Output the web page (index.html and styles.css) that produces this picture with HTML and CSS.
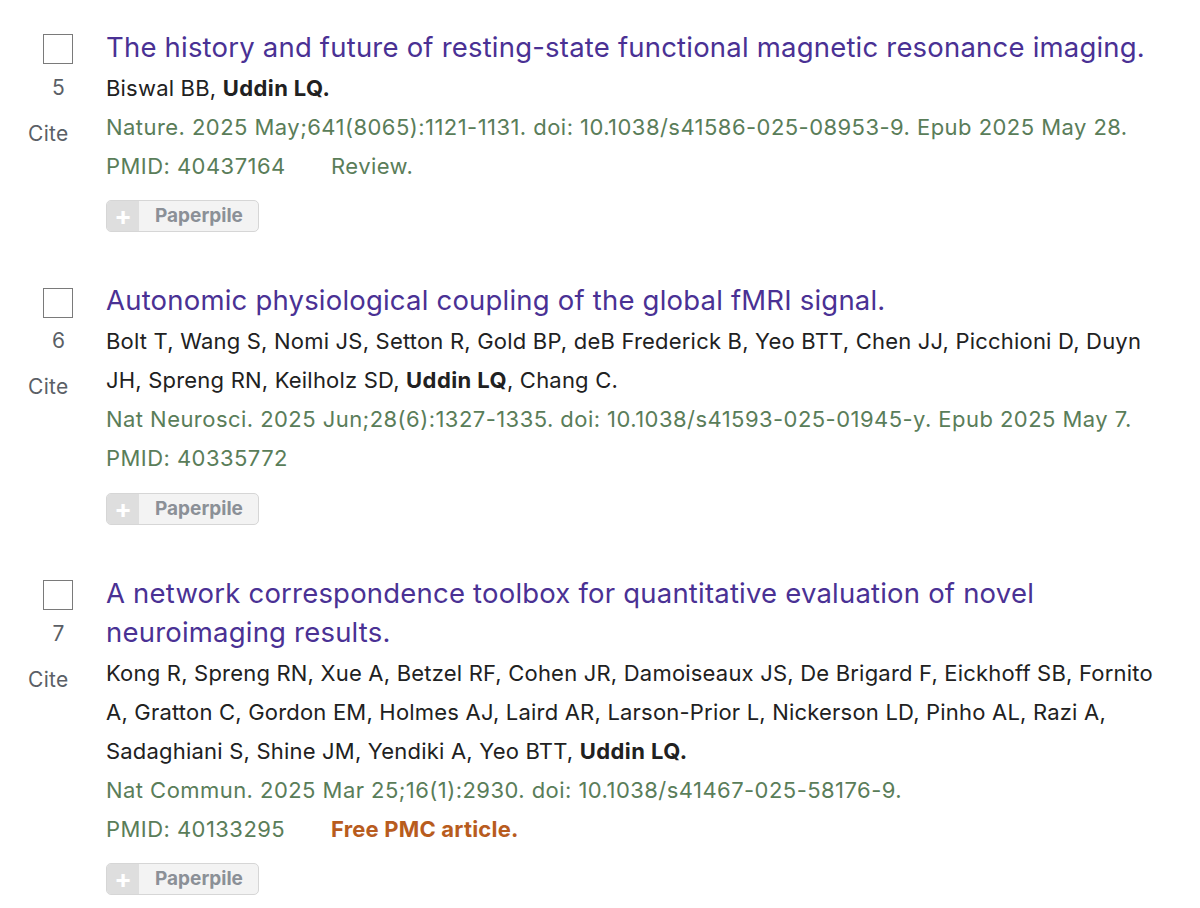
FILE: index.html
```html
<!DOCTYPE html>
<html lang="en">
<head>
<meta charset="utf-8">
<title>Publications</title>
<link rel="stylesheet" href="styles.css">
</head>
<body>
<div class="list">
  <article class="item">
    <div class="side">
      <span class="check"></span>
      <span class="num">5</span>
      <span class="cite">Cite</span>
    </div>
    <div class="main">
      <a class="title" href="#">The history and future of resting-state functional magnetic resonance imaging.</a>
      <div class="authors">Biswal BB, <b>Uddin LQ.</b></div>
      <div class="journal">Nature. 2025 May;641(8065):1121-1131. doi: 10.1038/s41586-025-08953-9. Epub 2025 May 28.</div>
      <div class="journal"><span class="pmid">PMID: 40437164</span><span class="extra">Review.</span></div>
      <div class="pp"><span class="pp-plus">+</span><span class="pp-label">Paperpile</span></div>
    </div>
  </article>
  <article class="item">
    <div class="side">
      <span class="check"></span>
      <span class="num">6</span>
      <span class="cite">Cite</span>
    </div>
    <div class="main">
      <a class="title" href="#">Autonomic physiological coupling of the global fMRI signal.</a>
      <div class="authors">Bolt T, Wang S, Nomi JS, Setton R, Gold BP, deB Frederick B, Yeo BTT, Chen JJ, Picchioni D, Duyn JH, Spreng RN, Keilholz SD, <b>Uddin LQ</b>, Chang C.</div>
      <div class="journal">Nat Neurosci. 2025 Jun;28(6):1327-1335. doi: 10.1038/s41593-025-01945-y. Epub 2025 May 7.</div>
      <div class="journal"><span class="pmid">PMID: 40335772</span></div>
      <div class="pp"><span class="pp-plus">+</span><span class="pp-label">Paperpile</span></div>
    </div>
  </article>
  <article class="item">
    <div class="side">
      <span class="check"></span>
      <span class="num">7</span>
      <span class="cite">Cite</span>
    </div>
    <div class="main">
      <a class="title" href="#">A network correspondence toolbox for quantitative evaluation of novel neuroimaging results.</a>
      <div class="authors">Kong R, Spreng RN, Xue A, Betzel RF, Cohen JR, Damoiseaux JS, De Brigard F, Eickhoff SB, Fornito A, Gratton C, Gordon EM, Holmes AJ, Laird AR, Larson-Prior L, Nickerson LD, Pinho AL, Razi A, Sadaghiani S, Shine JM, Yendiki A, Yeo BTT, <b>Uddin LQ.</b></div>
      <div class="journal">Nat Commun. 2025 Mar 25;16(1):2930. doi: 10.1038/s41467-025-58176-9.</div>
      <div class="journal"><span class="pmid">PMID: 40133295</span><span class="extra free">Free PMC article.</span></div>
      <div class="pp"><span class="pp-plus">+</span><span class="pp-label">Paperpile</span></div>
    </div>
  </article>
</div>
</body>
</html>
```
FILE: styles.css
```css
html, body {
  margin: 0;
  padding: 0;
  background: #ffffff;
}
body {
  font-family: Inter, "Liberation Sans", Arial, sans-serif;
  color: #212121;
}
.list {
  padding-top: 27.5px;
  display: flex;
  flex-direction: column;
  gap: 49px;
}
.item {
  display: flex;
}
.side {
  width: 106px;
  flex: none;
  display: flex;
  flex-direction: column;
  padding-top: 6.5px;
  box-sizing: border-box;
}
.check {
  display: block;
  width: 28px;
  height: 28px;
  border: 1.5px solid #7a7a7a;
  margin-left: 43px;
}
.num {
  width: 31px;
  margin-left: 43px;
  text-align: center;
  font-size: 21px;
  line-height: 39px;
  margin-top: 3.5px;
  color: #5b5f66;
}
.cite {
  margin-left: 28px;
  font-size: 21px;
  line-height: 39px;
  margin-top: 7px;
  color: #5b5f66;
  letter-spacing: 0.3px;
}
.main {
  width: 1064px;
  flex: none;
}
.title {
  display: block;
  font-size: 27.5px;
  letter-spacing: 0.2px;
  line-height: 39px;
  margin-bottom: 2px;
  color: #4a3194;
  text-decoration: none;
}
.authors, .journal {
  font-size: 22px;
  letter-spacing: 0.45px;
  line-height: 39px;
}
.authors {
  letter-spacing: 0.2px;
}
.authors b {
  letter-spacing: 0.4px;
}
.journal {
  color: #5a7d59;
}
.pmid {
  display: inline-block;
  width: 225px;
}
.extra.free {
  color: #b85c1e;
  font-weight: bold;
  letter-spacing: 0.2px;
}
.pp {
  display: inline-flex;
  margin-top: 14.5px;
  height: 32px;
  box-sizing: border-box;
  border: 1px solid #d6d6d6;
  border-radius: 5px;
  overflow: hidden;
  background: #f3f3f3;
}
.pp-plus {
  width: 32px;
  background: #dedede;
  color: #ffffff;
  font-size: 26px;
  font-weight: bold;
  line-height: 30px;
  text-align: center;
}
.pp-label {
  padding: 0 15px 0 16px;
  color: #8b9097;
  font-weight: bold;
  font-size: 19px;
  line-height: 30px;
}
```
